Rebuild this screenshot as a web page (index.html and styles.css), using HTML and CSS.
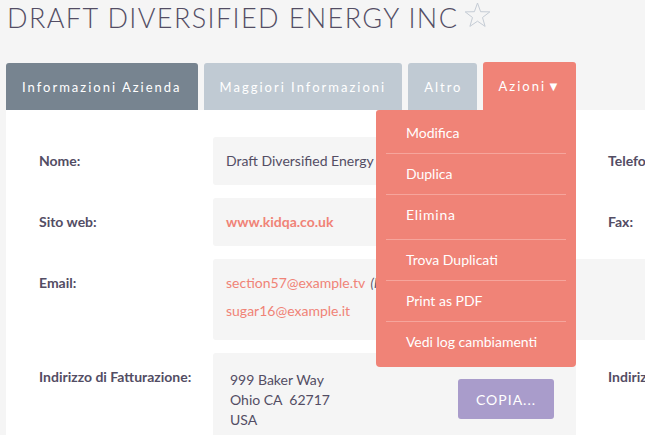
FILE: index.html
```html
<!DOCTYPE html>
<html>
<head>
    <title>Draft Diversified Energy Inc</title>
    <link rel="stylesheet" href="styles.css">
</head>
<body>
    <div class="header">
        <h2 class="title">DRAFT DIVERSIFIED ENERGY INC</h2>
        <svg class="star" width="27" height="26" viewBox="0 0 27 26">
            <polygon points="13.5,1 16.6,9.7 25.8,9.9 18.5,15.5 21.1,24.4 13.5,19.2 5.9,24.4 8.5,15.5 1.2,9.9 10.4,9.7" fill="none" stroke="#c5ccd5" stroke-width="1"/>
        </svg>
    </div>

    <div class="tabs">
        <div class="tab tab-active">Informazioni Azienda</div>
        <div class="tab">Maggiori Informazioni</div>
        <div class="tab tab-short">Altro</div>
        <div class="tab tab-actions">
            Azioni <span class="caret">&#9660;</span>
            <ul class="dropdown">
                <li>Modifica</li>
                <li>Duplica</li>
                <li class="spaced">Elimina</li>
                <li class="divider"></li>
                <li>Trova Duplicati</li>
                <li>Print as PDF</li>
                <li class="last">Vedi log cambiamenti</li>
            </ul>
        </div>
    </div>

    <div class="panel">
        <div class="row">
            <div class="field">
                <div class="label">Nome:</div>
                <div class="value">Draft Diversified Energy Inc</div>
            </div>
            <div class="field">
                <div class="label">Telefono ufficio:</div>
                <div class="value"></div>
            </div>
        </div>

        <div class="row">
            <div class="field">
                <div class="label">Sito web:</div>
                <div class="value"><a class="link bold">www.kidqa.co.uk</a></div>
            </div>
            <div class="field">
                <div class="label">Fax:</div>
                <div class="value"></div>
            </div>
        </div>

        <div class="row">
            <div class="field field-wide">
                <div class="label">Email:</div>
                <div class="value value-emails">
                    <div><a class="link">section57@example.tv</a> <em class="note">(Primario)</em></div>
                    <div class="email-second"><a class="link">sugar16@example.it</a></div>
                </div>
            </div>
        </div>

        <div class="row">
            <div class="field">
                <div class="label">Indirizzo di Fatturazione:</div>
                <div class="value value-address">
                    <div class="address">
                        999 Baker Way<br>
                        Ohio CA&nbsp; 62717<br>
                        USA
                    </div>
                    <button class="copy">COPIA...</button>
                </div>
            </div>
            <div class="field">
                <div class="label">Indirizzo di Spedizione:</div>
                <div class="value"></div>
            </div>
        </div>
    </div>
</body>
</html>
```

FILE: styles.css
```css
body {
    font-family: Lato, "Open Sans", sans-serif;
    background-color: #f5f5f5;
    color: #534d64;
    margin: 0;
    padding: 0;
    overflow: hidden;
}

.header {
    display: flex;
    align-items: flex-start;
    height: 62px;
    padding-left: 7px;
}

.title {
    margin: 0;
    padding-top: 2px;
    font-size: 27px;
    font-weight: 300;
    line-height: 32px;
    letter-spacing: 1.4px;
    color: #534d64;
}

.star {
    margin-top: 2px;
    margin-left: 6px;
}

.tabs {
    display: flex;
    gap: 6px;
    padding-left: 6px;
    height: 48px;
}

.tab {
    display: flex;
    align-items: center;
    padding: 0 16px;
    font-size: 13px;
    letter-spacing: 2px;
    color: #fff;
    background-color: #c0cad3;
    border-radius: 3px 3px 0 0;
    margin-top: 1px;
}

.tab-active {
    background-color: #778490;
}

.tab-short {
    padding-right: 15px;
}

.tab-actions {
    position: relative;
    background-color: #f08377;
    margin-top: 0;
    padding: 0 16px 0 15px;
}

.caret {
    font-size: 13px;
    margin-left: 1px;
    letter-spacing: 0;
}

.dropdown {
    position: absolute;
    top: 100%;
    right: 0;
    width: 200px;
    margin: 0;
    padding: 3px 0;
    list-style: none;
    background-color: #f08377;
    border-radius: 3px 0 4px 4px;
    z-index: 10;
    letter-spacing: 0;
}

.dropdown li {
    margin: 0 10px;
    padding: 10px 0 10px 20px;
    line-height: 20px;
    font-size: 14px;
    color: #fff;
    white-space: nowrap;
    border-bottom: 1px solid #f6a59c;
}

.dropdown li.spaced {
    letter-spacing: 0.8px;
    border-bottom: none;
}

.dropdown li.divider {
    padding: 0;
    height: 4px;
}

.dropdown li.last {
    border-bottom: none;
    padding-bottom: 12px;
}

.panel {
    background-color: #fff;
    margin-left: 6px;
    width: 1200px;
    padding: 27px 0 0 33px;
    height: 400px;
}

.row {
    display: flex;
    gap: 32px;
    margin-bottom: 13px;
}

.field {
    display: flex;
    width: 537px;
}

.field-wide {
    width: auto;
    flex: 1;
}

.label {
    width: 174px;
    flex-shrink: 0;
    padding-top: 14px;
    line-height: 20px;
    font-size: 14px;
    font-weight: bold;
    white-space: nowrap;
}

.value {
    flex: 1;
    background-color: #f5f5f5;
    border-radius: 3px;
    padding: 14px 13px;
    line-height: 20px;
    font-size: 14px;
    min-height: 20px;
    white-space: nowrap;
    overflow: hidden;
}

.link {
    color: #f08377;
}

.bold {
    font-weight: bold;
}

.note {
    font-size: 13px;
    margin-left: 2px;
}

.value-emails {
    padding-bottom: 19px;
}

.email-second {
    margin-top: 8px;
}

.value-address {
    display: flex;
    justify-content: space-between;
    padding: 17px 22px 20px 17px;
    height: 80px;
}

.copy {
    margin-top: 9px;
    width: 96px;
    height: 40px;
    border: none;
    border-radius: 3px;
    background-color: #a99ccb;
    color: #fff;
    font-family: Lato, sans-serif;
    font-size: 14px;
    letter-spacing: 1px;
}
```
